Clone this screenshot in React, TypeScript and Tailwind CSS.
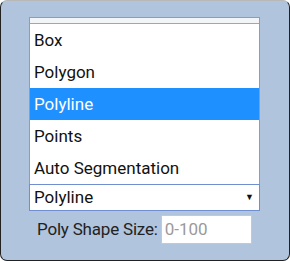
import React from "react";

const items = ["Box", "Polygon", "Polyline", "Points", "Auto Segmentation"];

export default function App() {
  const font = { fontFamily: 'Roboto, "Noto Sans", sans-serif' };
  return (
    <div className="w-[290px] h-[261px] bg-white" style={font}>
      <div className="w-[290px] h-[261px] bg-[#b0c4de] border-[1.5px] border-[#222] border-t-[#b8b8b8] rounded-[7px] pl-[28px] pr-[29px] pt-[16px] flex flex-col">
        <div className="border border-[#8d9db5] border-b-0 bg-white">
          <div className="h-[6px] bg-[#f2f4f8] border-b border-[#9aa7bb]" />
          {items.map((it) => (
            <div
              key={it}
              className={
                "h-[32px] flex items-center pl-[4px] text-[17px] leading-none " +
                (it === "Polyline" ? "bg-[#1e90ff] text-white" : "text-[#111]")
              }
            >
              {it}
            </div>
          ))}
        </div>
        <div className="h-[27px] border border-[#6f8fd0] bg-white flex items-center justify-between pl-[4px] pr-[5px] text-[17px] text-[#111] leading-none">
          <span>Polyline</span>
          <span className="text-[9px]">▼</span>
        </div>
        <div className="flex items-center mt-[4px] ml-[8px] gap-[3px]">
          <span className="text-[17px] text-[#222] leading-none tracking-[-0.2px]">Poly Shape Size:</span>
          <div className="w-[91px] h-[29px] bg-white border border-[#c8c8c8] flex items-center pl-[3px] text-[17px] text-[#9a9a9a] leading-none">
            0-100
          </div>
        </div>
      </div>
    </div>
  );
}
